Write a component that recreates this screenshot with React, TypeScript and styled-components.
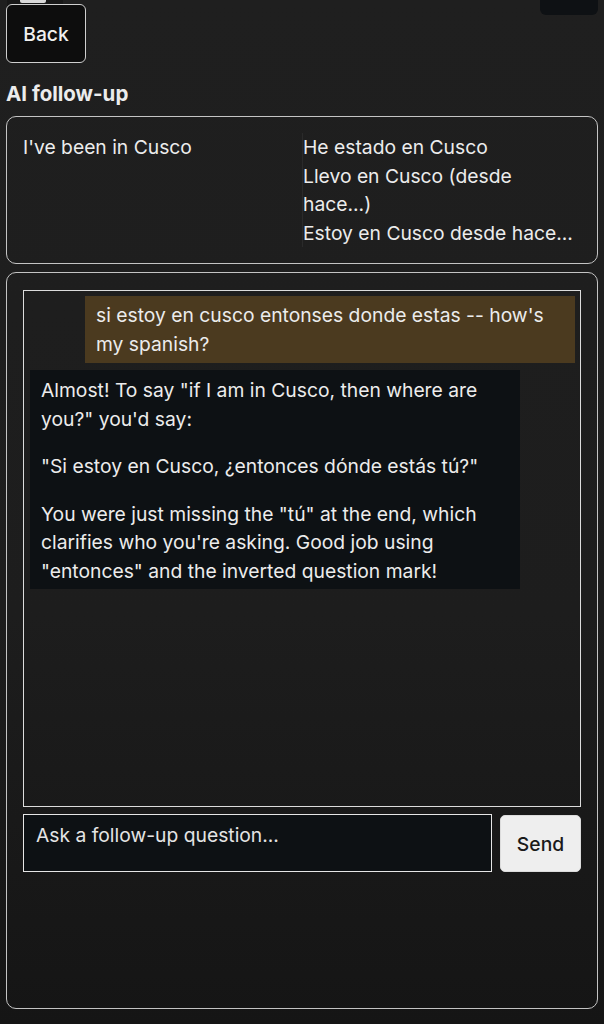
import React from 'react';
import styled, { createGlobalStyle } from 'styled-components';

const GlobalStyle = createGlobalStyle`
  html, body {
    margin: 0;
    padding: 0;
  }
  body {
    min-height: 1024px;
    background: linear-gradient(180deg, #1f1f1f 0%, #1d1d1d 60%, #151515 100%);
    color: #ececec;
    font-family: Inter, "Noto Sans", sans-serif;
    font-size: 19.3px;
    line-height: 28.5px;
  }
`;

type Message = {
  role: 'user' | 'assistant';
  paragraphs: string[];
};

const messages: Message[] = [
  {
    role: 'user',
    paragraphs: ["si estoy en cusco entonses donde estas -- how's my spanish?"]
  },
  {
    role: 'assistant',
    paragraphs: [
      'Almost! To say "if I am in Cusco, then where are you?" you\'d say:',
      '"Si estoy en Cusco, ¿entonces dónde estás tú?"',
      'You were just missing the "tú" at the end, which clarifies who you\'re asking. Good job using "entonces" and the inverted question mark!'
    ]
  }
];

const translations = ['He estado en Cusco', 'Llevo en Cusco (desde hace...)', 'Estoy en Cusco desde hace...'];

// Styling
const Page = styled.div`
  padding: 4px 6px 16px;
  box-sizing: border-box;
`;

const TopStrip = styled.div`
  position: relative;
  height: 0;
`;

const StubLeft = styled.div`
  position: absolute;
  left: 1px;
  top: -4px;
  width: 56px;
  height: 14px;
  background: #171717;
  &::after {
    content: '';
    position: absolute;
    left: 13px;
    top: 0;
    width: 26px;
    height: 3px;
    background: #d8d8d8;
    border-radius: 0 0 2px 2px;
  }
`;

const StubRight = styled.div`
  position: absolute;
  right: 0;
  top: -4px;
  width: 58px;
  height: 15px;
  background: #0e1114;
  border-radius: 0 0 6px 6px;
`;

const BackButton = styled.button`
  display: block;
  width: 80px;
  height: 59px;
  padding: 0;
  background: #0d0d0d;
  color: #f0f0f0;
  border: 1px solid #cfcfcf;
  border-radius: 6px;
  font-family: inherit;
  font-size: 19.3px;
  font-weight: 500;
  position: relative;
`;

const Title = styled.h2`
  margin: 18px 0 9px;
  font-size: 20.5px;
  line-height: 26px;
  font-weight: 700;
  color: #ececec;
`;

const Card = styled.div<{ $height?: number }>`
  border: 1px solid #c4c4c4;
  border-radius: 10px;
  padding: 16px;
  box-sizing: border-box;
  ${({ $height }) => ($height ? `height: ${$height}px;` : '')}
  & + & {
    margin-top: 8px;
  }
`;

const PhraseGrid = styled.div`
  display: grid;
  grid-template-columns: 1fr 1fr;
`;

const PhraseColumn = styled.div<{ $divided?: boolean }>`
  ${({ $divided }) => ($divided ? 'border-left: 1px solid #2a2a2a;' : '')}
`;

const MessageBox = styled.div`
  height: 517px;
  border: 1px solid #dcdcdc;
  padding: 5px 5px;
  box-sizing: border-box;
  display: flex;
  flex-direction: column;
  gap: 7px;
  margin-top: 1px;
`;

const Bubble = styled.div<{ $role: 'user' | 'assistant' }>`
  max-width: 490px;
  box-sizing: border-box;
  align-self: ${({ $role }) => ($role === 'user' ? 'flex-end' : 'flex-start')};
  background: ${({ $role }) => ($role === 'user' ? '#4b3a1f' : '#0d1114')};
  padding: ${({ $role }) => ($role === 'user' ? '5px 11px' : '6px 11px 4px')};
  margin-left: ${({ $role }) => ($role === 'user' ? '0' : '1px')};

  p {
    margin: 0;
  }
  p + p {
    margin-top: 19px;
  }
`;

const InputRow = styled.div`
  display: flex;
  gap: 8px;
  margin-top: 7px;
`;

const Input = styled.textarea`
  flex: 1;
  height: 58px;
  box-sizing: border-box;
  resize: none;
  background: #0d1114;
  color: #ececec;
  border: 1px solid #e6e6e6;
  border-radius: 0;
  padding: 6px 12px;
  font-family: inherit;
  font-size: 19.3px;
  line-height: 28.5px;
  outline: none;

  &::placeholder {
    color: #e4e4e4;
    opacity: 1;
  }
`;

const SendButton = styled.button`
  width: 81px;
  height: 57px;
  margin-top: 1px;
  background: #eeeeee;
  color: #1a1a1a;
  border: 1px solid #dcdcdc;
  border-radius: 5px;
  font-family: inherit;
  font-size: 19.3px;
  font-weight: 500;
  padding: 0;
`;

const App = (): JSX.Element => {
  return (
    <>
      <GlobalStyle />
      <Page>
        <TopStrip>
          <StubLeft />
          <StubRight />
        </TopStrip>
        <BackButton>Back</BackButton>
        <Title>AI follow-up</Title>
        <Card>
          <PhraseGrid>
            <PhraseColumn>I&apos;ve been in Cusco</PhraseColumn>
            <PhraseColumn $divided>
              {translations.map((t) => (
                <div key={t}>{t}</div>
              ))}
            </PhraseColumn>
          </PhraseGrid>
        </Card>
        <Card $height={737}>
          <MessageBox>
            {messages.map((m, i) => (
              <Bubble key={i} $role={m.role}>
                {m.paragraphs.map((p, j) => (
                  <p key={j}>{p}</p>
                ))}
              </Bubble>
            ))}
          </MessageBox>
          <InputRow>
            <Input placeholder="Ask a follow-up question..." />
            <SendButton>Send</SendButton>
          </InputRow>
        </Card>
      </Page>
    </>
  );
};

export default App;
